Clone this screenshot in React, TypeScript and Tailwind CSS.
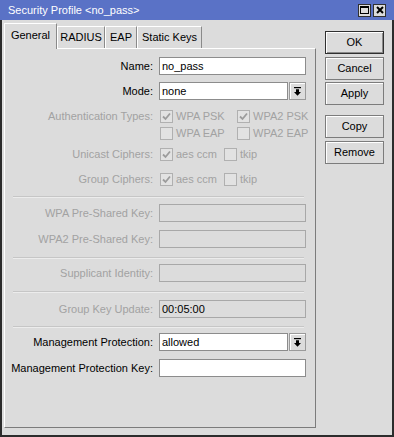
import React from "react";

const Check = ({ checked }: { checked?: boolean }) => (
  <span className="w-[13px] h-[13px] border border-[#b0b0b0] bg-[#e2e2e2] flex items-center justify-center shrink-0">
    {checked && (
      <svg width="9" height="9" viewBox="0 0 9 9">
        <path d="M1 4.5 L3.5 7 L8 1.5" stroke="#9c9c9c" strokeWidth="1.8" fill="none" />
      </svg>
    )}
  </span>
);

const DropBtn = () => (
  <span className="w-[17px] h-[18px] border border-[#9a9a9a] bg-[#dcdcdc] shadow-[inset_1px_1px_0_#fff] flex items-center justify-center shrink-0">
    <svg width="7" height="9" viewBox="0 0 7 9">
      <rect x="0" y="0" width="7" height="1.2" fill="#000" />
      <path d="M2 2.2 H5 V5 H7 L3.5 8.8 L0 5 H2 Z" fill="#000" />
    </svg>
  </span>
);

const Label = ({ text, off }: { text: string; off?: boolean }) => (
  <span className={`w-[149px] text-right pr-px ${off ? "text-[#a2a2a2]" : "text-black"}`}>{text}</span>
);

const Field = ({ label, value, off, drop, mt }: { label: string; value?: string; off?: boolean; drop?: boolean; mt: string }) => (
  <div className={`flex items-center h-[18px] ${mt}`}>
    <Label text={label} off={off} />
    <div className="ml-[5px] w-[147px] flex h-[18px]">
      <div
        className={`flex-1 h-[18px] border px-[2px] flex items-center ${
          off ? "border-[#a8a8a8] bg-[#dcdcdc]" : "border-[#8c8c8c] bg-white"
        } ${drop ? "mr-px" : ""}`}
      >
        {value}
      </div>
      {drop && <DropBtn />}
    </div>
  </div>
);

const Sep = ({ mt }: { mt: string }) => (
  <div className={`${mt} ml-[8px] w-[291px] h-[2px] border-t border-[#c6c6c6] border-b border-b-[#ececec]`} />
);

const Btn = ({ text, mt, def }: { text: string; mt: string; def?: boolean }) => (
  <div
    className={`${mt} w-[59px] h-[23px] flex items-center justify-center bg-[#dcdcdc] border ${
      def ? "border-[#303030] shadow-[inset_1px_1px_0_#fff,inset_-1px_-1px_0_#8a8a8a]" : "border-[#7c7c7c] shadow-[inset_1px_1px_0_#fff]"
    }`}
  >
    {text}
  </div>
);

const Tab = ({ text, active, w }: { text: string; active?: boolean; w: string }) => (
  <div
    className={`${w} flex items-center justify-center border-t border-l border-white border-r border-r-[#8a8a8a] ${
      active ? "h-[26px] -mb-px relative z-10 bg-[#dcdcdc] pb-[3px]" : "h-[22px]"
    }`}
  >
    {text}
  </div>
);

export default function App() {
  return (
    <div className="w-[394px] h-[437px] flex flex-col bg-[#dcdcdc] text-[11px] text-black font-['Liberation_Sans',Arial,sans-serif] leading-none">
      <div className="h-[20px] bg-[#5a72c6] flex items-center pl-[8px] pr-[8px] text-white">
        <span className="flex-1">Security Profile &lt;no_pass&gt;</span>
        <div className="flex gap-[2px]">
          <span className="w-[13px] h-[13px] bg-[#dcdcdc] border border-[#303030] flex items-center justify-center">
            <span className="w-[9px] h-[8px] border border-black border-t-2" />
          </span>
          <span className="w-[13px] h-[13px] bg-[#dcdcdc] border border-[#303030] flex items-center justify-center">
            <svg width="8" height="8" viewBox="0 0 8 8">
              <path d="M1 1 L7 7 M7 1 L1 7" stroke="#000" strokeWidth="2" />
            </svg>
          </span>
        </div>
      </div>
      <div className="flex-1 flex border-l-2 border-r-2 border-b-2 border-[#2c2c2c]">
        <div className="ml-[2px] w-[312px] flex flex-col pb-[7px]">
          <div className="h-[28px] flex items-end">
            <Tab text="General" active w="w-[53px]" />
            <Tab text="RADIUS" w="w-[48px]" />
            <Tab text="EAP" w="w-[32px]" />
            <Tab text="Static Keys" w="w-[65px]" />
          </div>
          <div className="flex-1 flex flex-col border-t border-l border-white border-r border-b border-r-[#7c7c7c] border-b-[#7c7c7c]">
            <Field label="Name:" value="no_pass" mt="mt-[8px]" />
            <Field label="Mode:" value="none" drop mt="mt-[7px]" />
            <div className="flex items-center h-[18px] mt-[7px] text-[#a2a2a2]">
              <Label text="Authentication Types:" off />
              <div className="ml-[6px] flex items-center">
                <Check checked />
                <span className="ml-[3px] w-[61px]">WPA PSK</span>
                <Check checked />
                <span className="ml-[3px]">WPA2 PSK</span>
              </div>
            </div>
            <div className="flex items-center h-[17px] text-[#a2a2a2]">
              <span className="w-[149px]" />
              <div className="ml-[6px] flex items-center">
                <Check />
                <span className="ml-[3px] w-[61px]">WPA EAP</span>
                <Check />
                <span className="ml-[3px]">WPA2 EAP</span>
              </div>
            </div>
            <div className="flex items-center h-[18px] mt-[3px] text-[#a2a2a2]">
              <Label text="Unicast Ciphers:" off />
              <div className="ml-[6px] flex items-center">
                <Check checked />
                <span className="ml-[3px] w-[48px]">aes ccm</span>
                <Check />
                <span className="ml-[3px]">tkip</span>
              </div>
            </div>
            <div className="flex items-center h-[18px] mt-[7px] text-[#a2a2a2]">
              <Label text="Group Ciphers:" off />
              <div className="ml-[6px] flex items-center">
                <Check checked />
                <span className="ml-[3px] w-[48px]">aes ccm</span>
                <Check />
                <span className="ml-[3px]">tkip</span>
              </div>
            </div>
            <Sep mt="mt-[8px]" />
            <Field label="WPA Pre-Shared Key:" off mt="mt-[6px]" />
            <Field label="WPA2 Pre-Shared Key:" off mt="mt-[8px]" />
            <Sep mt="mt-[9px]" />
            <Field label="Supplicant Identity:" off mt="mt-[5px]" />
            <Sep mt="mt-[9px]" />
            <Field label="Group Key Update:" off value="00:05:00" mt="mt-[7px]" />
            <Sep mt="mt-[8px]" />
            <Field label="Management Protection:" value="allowed" drop mt="mt-[5px]" />
            <Field label="Management Protection Key:" mt="mt-[8px]" />
          </div>
        </div>
        <div className="ml-[9px] flex flex-col">
          <Btn text="OK" def mt="mt-[11px]" />
          <Btn text="Cancel" mt="mt-[3px]" />
          <Btn text="Apply" mt="mt-[2px]" />
          <Btn text="Copy" mt="mt-[10px]" />
          <Btn text="Remove" mt="mt-[3px]" />
        </div>
      </div>
    </div>
  );
}
